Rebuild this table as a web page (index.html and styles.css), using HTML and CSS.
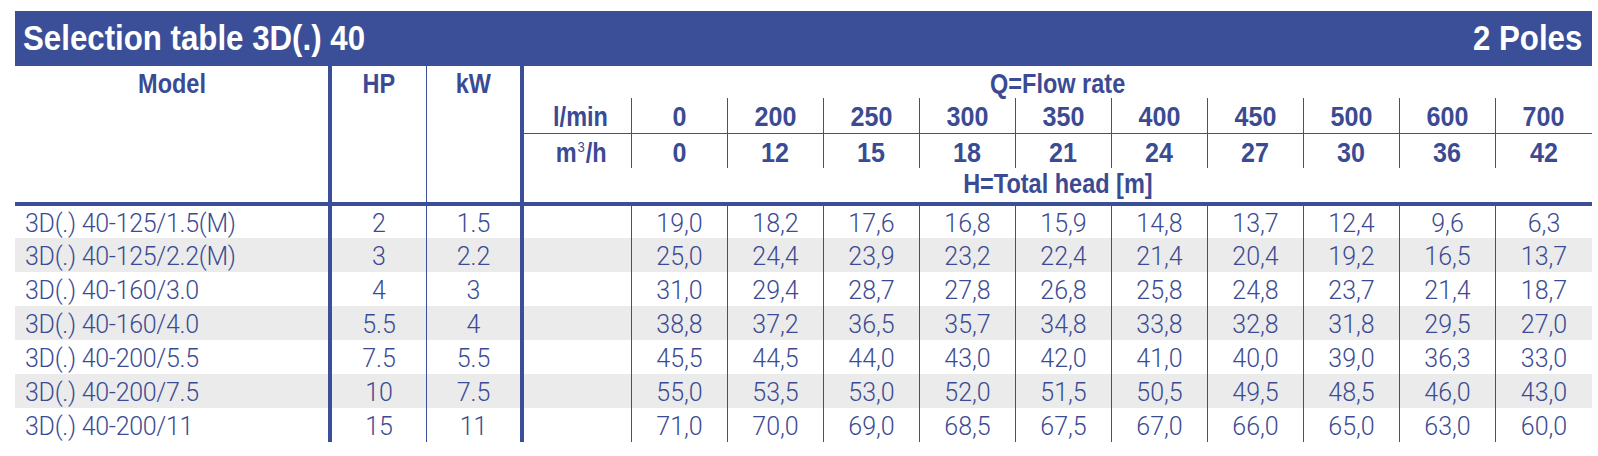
FILE: index.html
```html
<!DOCTYPE html>
<html lang="en">
<head>
<meta charset="utf-8">
<title>Selection table 3D(.) 40</title>
<link rel="stylesheet" href="styles.css">
</head>
<body>
<div class="sheet">
  <div class="titlebar"><span class="title">Selection table 3D(.) 40</span><span class="poles">2 Poles</span></div>
  <div class="grid">
    <div class="h h-model"><span class="t">Model</span></div>
    <div class="h h-hp"><span class="t">HP</span></div>
    <div class="h h-kw"><span class="t">kW</span></div>
    <div class="h h-q"><span class="t">Q=Flow rate</span></div>

    <div class="h h-unit r2"><span class="t">l/min</span></div>
    <div class="h h-num r2"><span class="t">0</span></div><div class="h h-num r2"><span class="t">200</span></div><div class="h h-num r2"><span class="t">250</span></div><div class="h h-num r2"><span class="t">300</span></div><div class="h h-num r2"><span class="t">350</span></div><div class="h h-num r2"><span class="t">400</span></div><div class="h h-num r2"><span class="t">450</span></div><div class="h h-num r2"><span class="t">500</span></div><div class="h h-num r2"><span class="t">600</span></div><div class="h h-num r2"><span class="t">700</span></div>

    <div class="h h-unit r3"><span class="t">m<sup>3</sup>/h</span></div>
    <div class="h h-num r3"><span class="t">0</span></div><div class="h h-num r3"><span class="t">12</span></div><div class="h h-num r3"><span class="t">15</span></div><div class="h h-num r3"><span class="t">18</span></div><div class="h h-num r3"><span class="t">21</span></div><div class="h h-num r3"><span class="t">24</span></div><div class="h h-num r3"><span class="t">27</span></div><div class="h h-num r3"><span class="t">30</span></div><div class="h h-num r3"><span class="t">36</span></div><div class="h h-num r3"><span class="t">42</span></div>

    <div class="h h-head"><span class="t">H=Total head [m]</span></div>

    <div class="row first">
      <div class="c model">3D(.) 40-125/1.5(M)</div><div class="c hp">2</div><div class="c kw">1.5</div><div class="c unit"></div>
      <div class="c v">19,0</div><div class="c v">18,2</div><div class="c v">17,6</div><div class="c v">16,8</div><div class="c v">15,9</div><div class="c v">14,8</div><div class="c v">13,7</div><div class="c v">12,4</div><div class="c v">9,6</div><div class="c v">6,3</div>
    </div>
    <div class="row alt">
      <div class="c model">3D(.) 40-125/2.2(M)</div><div class="c hp">3</div><div class="c kw">2.2</div><div class="c unit"></div>
      <div class="c v">25,0</div><div class="c v">24,4</div><div class="c v">23,9</div><div class="c v">23,2</div><div class="c v">22,4</div><div class="c v">21,4</div><div class="c v">20,4</div><div class="c v">19,2</div><div class="c v">16,5</div><div class="c v">13,7</div>
    </div>
    <div class="row">
      <div class="c model">3D(.) 40-160/3.0</div><div class="c hp">4</div><div class="c kw">3</div><div class="c unit"></div>
      <div class="c v">31,0</div><div class="c v">29,4</div><div class="c v">28,7</div><div class="c v">27,8</div><div class="c v">26,8</div><div class="c v">25,8</div><div class="c v">24,8</div><div class="c v">23,7</div><div class="c v">21,4</div><div class="c v">18,7</div>
    </div>
    <div class="row alt">
      <div class="c model">3D(.) 40-160/4.0</div><div class="c hp">5.5</div><div class="c kw">4</div><div class="c unit"></div>
      <div class="c v">38,8</div><div class="c v">37,2</div><div class="c v">36,5</div><div class="c v">35,7</div><div class="c v">34,8</div><div class="c v">33,8</div><div class="c v">32,8</div><div class="c v">31,8</div><div class="c v">29,5</div><div class="c v">27,0</div>
    </div>
    <div class="row">
      <div class="c model">3D(.) 40-200/5.5</div><div class="c hp">7.5</div><div class="c kw">5.5</div><div class="c unit"></div>
      <div class="c v">45,5</div><div class="c v">44,5</div><div class="c v">44,0</div><div class="c v">43,0</div><div class="c v">42,0</div><div class="c v">41,0</div><div class="c v">40,0</div><div class="c v">39,0</div><div class="c v">36,3</div><div class="c v">33,0</div>
    </div>
    <div class="row alt">
      <div class="c model">3D(.) 40-200/7.5</div><div class="c hp">10</div><div class="c kw">7.5</div><div class="c unit"></div>
      <div class="c v">55,0</div><div class="c v">53,5</div><div class="c v">53,0</div><div class="c v">52,0</div><div class="c v">51,5</div><div class="c v">50,5</div><div class="c v">49,5</div><div class="c v">48,5</div><div class="c v">46,0</div><div class="c v">43,0</div>
    </div>
    <div class="row">
      <div class="c model">3D(.) 40-200/11</div><div class="c hp">15</div><div class="c kw">11</div><div class="c unit"></div>
      <div class="c v">71,0</div><div class="c v">70,0</div><div class="c v">69,0</div><div class="c v">68,5</div><div class="c v">67,5</div><div class="c v">67,0</div><div class="c v">66,0</div><div class="c v">65,0</div><div class="c v">63,0</div><div class="c v">60,0</div>
    </div>
  </div>
</div>
</body>
</html>
```

FILE: styles.css
```css
body {
  margin: 11px 0 0 15px;
  background: #ffffff;
}

.sheet {
  width: 1577px;
  color: #3b4b93;
}

.titlebar {
  height: 55px;
  box-sizing: border-box;
  padding: 0 10px 0 8px;
  background: #3b4e98;
  color: #ffffff;
  display: flex;
  justify-content: space-between;
  align-items: center;
  font-family: "Liberation Sans", Arial, sans-serif;
  font-weight: bold;
  font-size: 35.5px;
  line-height: 1;
}

.title,
.poles {
  display: inline-block;
  transform: scaleX(0.88);
  white-space: nowrap;
}

.title {
  transform-origin: left center;
}

.poles {
  transform-origin: right center;
}

.grid {
  display: grid;
  grid-template-columns: 313px 98px 94px 111px repeat(9, 96px) 97px;
  grid-template-rows: 32px 35px 35px 38px 32px repeat(6, 34px);
}

.grid > *,
.row > * {
  box-sizing: border-box;
  border: 0 solid #3b4e98;
}

/* header cells */
.h {
  font-family: "Liberation Sans", Arial, sans-serif;
  font-weight: bold;
  font-size: 27px;
  line-height: 30px;
  text-align: center;
  white-space: nowrap;
}

.h .t {
  display: inline-block;
  transform: scaleX(0.87);
  transform-origin: center;
}

.h-num .t {
  transform: scaleX(0.93);
}

.h-model {
  grid-column: 1;
  grid-row: 1 / 5;
  padding-top: 3px;
  border-bottom-width: 4px;
}

.h-hp {
  grid-column: 2;
  grid-row: 1 / 5;
  padding-top: 3px;
  border-left-width: 4px;
  border-bottom-width: 4px;
}

.h-kw {
  grid-column: 3;
  grid-row: 1 / 5;
  padding-top: 3px;
  border-left-width: 1px;
  border-bottom-width: 4px;
}

.h-q {
  grid-column: 4 / -1;
  grid-row: 1;
  padding-top: 3px;
  border-left-width: 4px;
}

.r2 {
  grid-row: 2;
  padding-top: 4px;
}

.r3 {
  grid-row: 3;
  padding-top: 4px;
  border-top-width: 1px;
}

.h-unit {
  border-left-width: 4px;
  padding-left: 7px;
}

.h-num {
  border-left-width: 1px;
}

.h-unit sup {
  font-size: 15px;
  font-weight: normal;
  vertical-align: 0;
  position: relative;
  top: -10px;
  margin: 0 1px;
}

.h-head {
  grid-column: 4 / -1;
  grid-row: 4;
  padding-top: 1px;
  border-left-width: 4px;
  border-bottom-width: 4px;
}

/* body rows */
.row {
  display: contents;
}

.c {
  font-family: Roboto, "Liberation Sans", sans-serif;
  font-weight: 300;
  font-size: 25px;
  line-height: 31px;
  padding-top: 3px;
  text-align: center;
  white-space: nowrap;
  overflow: hidden;
}

.row.first .c {
  padding-top: 2px;
}

.row.alt .c {
  background: #ebebeb;
}

.c.model {
  text-align: left;
  padding-left: 10px;
  letter-spacing: -0.3px;
}

.c.hp {
  border-left-width: 4px;
}

.c.kw {
  border-left-width: 1px;
}

.c.unit {
  border-left-width: 4px;
}

.c.v {
  border-left-width: 1px;
}
```
